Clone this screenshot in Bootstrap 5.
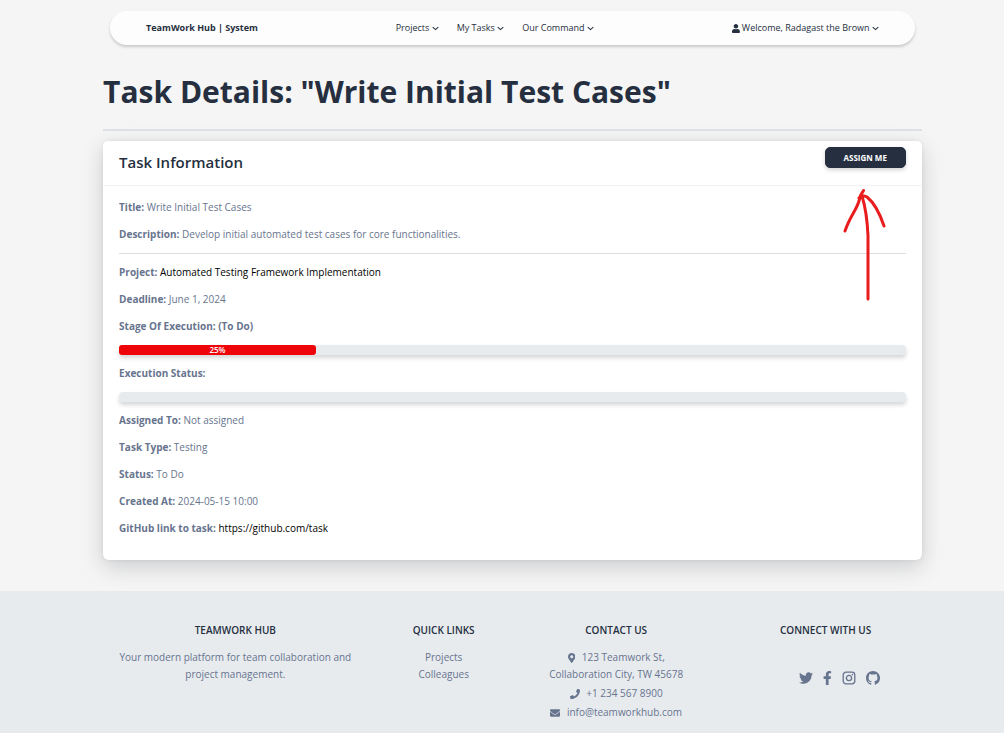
<!DOCTYPE html>
<html lang="en">
<head>
<meta charset="utf-8">
<meta name="viewport" content="width=device-width, initial-scale=1">
<title>Task Details - TeamWork Hub</title>
<link rel="stylesheet" href="https://cdn.jsdelivr.net/npm/bootstrap@5.3.0/dist/css/bootstrap.min.css">
<style>
:root { --ink: #252f40; --muted: #67748e; --tint: #e7ebee; }
body { font-family: "Open Sans", sans-serif; font-size: 10px; line-height: 20px; color: var(--muted); background: #f5f5f5; border-right: 2px solid #fff; }
a { color: inherit; text-decoration: none; }
.page-shell { padding-left: 21px; }
.page-width { width: 83.3%; max-width: 1140px; }
.top-bar { padding: 7px 36px; margin: 11px 7px 0; border-radius: 17px; background: #fdfdfd; box-shadow: 0 2px 3px rgba(0,0,0,.18); font-size: 9px; color: var(--ink); }
.top-bar .navbar-brand { font-size: 9px; line-height: 20px; font-weight: 700; color: var(--ink); padding: 0; margin: 0; }
.menu-list { gap: 18px; }
.chevron { width: 7px; height: 7px; fill: none; stroke: currentColor; stroke-width: 1.5; }
.page-title { font-size: 30px; line-height: 40px; font-weight: 700; color: var(--ink); margin: 27px 0 17px; }
.title-rule { border-top: 2px solid #dee1e6; opacity: 1; margin: 0 0 10px; }
.task-card { --bs-card-border-width: 0; --bs-card-border-radius: 6px; border: 0; color: var(--muted); box-shadow: 0 7px 22px rgba(20,30,40,.18), 0 0 4px rgba(0,0,0,.08); margin-bottom: 31px; }
.task-card .card-header { background: #fff; border-bottom: 1px solid #f3f3f4; padding: 6px 16px; height: 45px; }
.task-card h2 { font-size: 15px; line-height: 30px; font-weight: 600; color: var(--ink); }
.btn-assign { --bs-btn-font-size: 8px; --bs-btn-font-weight: 700; --bs-btn-padding-y: 0; --bs-btn-padding-x: 18px; --bs-btn-color: #fff; --bs-btn-bg: #252f40; --bs-btn-border-color: #252f40; --bs-btn-hover-color: #fff; --bs-btn-hover-bg: #38455c; --bs-btn-border-radius: 5px; line-height: 19px; box-shadow: 0 2px 4px rgba(0,0,0,.18); }
.task-card .card-body { padding: 11px 16px 15px; }
.task-card p { margin-bottom: 7px; }
.task-card p a { color: #000; }
.task-rule { border-top: 1px solid #dcdee0; opacity: 1; margin: 9px 0 8px; }
.stage-bar { --bs-progress-height: 10px; --bs-progress-bg: #e7ebee; --bs-progress-bar-bg: #ee0509; --bs-progress-border-radius: 4px; --bs-progress-font-size: 8px; margin: 9px 0 8px; box-shadow: 0 3px 4px rgba(0,0,0,.16); overflow: visible; }
.stage-bar .progress-bar { border-radius: 3px; font-weight: 600; }
.hand-arrow { position: absolute; top: 45px; right: 32px; width: 50px; height: 118px; fill: none; stroke: #e91d1d; stroke-width: 3; stroke-linecap: round; stroke-linejoin: round; pointer-events: none; }
.site-footer { background: var(--tint); padding-top: 30px; text-align: center; }
.footer-grid { width: 85%; display: grid; grid-template-columns: 282fr 136fr 210fr 210fr; line-height: 17px; }
.site-footer h3 { font-size: 10px; line-height: 18px; font-weight: 600; color: var(--ink); margin-bottom: 10px; }
.site-footer p { margin: 0; }
.site-footer .contact-line { margin-top: 2px; }
.glyph { height: 10px; fill: currentColor; }
.social { gap: 10px; margin: 32px 0 0 28px; }
.social svg { height: 14px; fill: currentColor; display: block; }
</style>
</head>
<body class="min-vh-100 d-flex flex-column">
<div class="page-shell">
<div class="page-width mx-auto">
  <nav class="top-bar d-flex justify-content-between align-items-center" aria-label="Main">
    <a class="navbar-brand" href="#">TeamWork Hub | System</a>
    <div class="menu-list d-flex">
      <a href="#">Projects <svg class="chevron" viewBox="0 0 10 10"><path d="M1 3L5 6.500 9 3"/></svg></a>
      <a href="#">My Tasks <svg class="chevron" viewBox="0 0 10 10"><path d="M1 3L5 6.500 9 3"/></svg></a>
      <a href="#">Our Command <svg class="chevron" viewBox="0 0 10 10"><path d="M1 3L5 6.500 9 3"/></svg></a>
    </div>
    <a href="#"><svg height="9" viewBox="0 0 448 512" fill="currentColor"><path d="M224 256c70.700 0 128-57.300 128-128S294.700 0 224 0 96 57.300 96 128s57.300 128 128 128zm89.600 32h-16.700c-22.200 10.200-46.900 16-72.900 16s-50.600-5.800-72.900-16h-16.700C60.200 288 0 348.200 0 422.400V464c0 26.500 21.500 48 48 48h352c26.500 0 48-21.500 48-48v-41.600c0-74.200-60.200-134.400-134.400-134.400z"/></svg> Welcome, Radagast the Brown <svg class="chevron" viewBox="0 0 10 10"><path d="M1 3L5 6.500 9 3"/></svg></a>
  </nav>
  <main>
    <h1 class="page-title">Task Details: "Write Initial Test Cases"</h1>
    <hr class="title-rule">
    <section class="card task-card">
      <div class="card-header d-flex justify-content-between align-items-start">
        <h2 class="mb-0">Task Information</h2>
        <button type="button" class="btn btn-assign">ASSIGN ME</button>
      </div>
      <div class="card-body">
        <p><strong>Title:</strong> Write Initial Test Cases</p>
        <p><strong>Description:</strong> Develop initial automated test cases for core functionalities.</p>
        <hr class="task-rule">
        <p><strong>Project:</strong> <a href="#">Automated Testing Framework Implementation</a></p>
        <p><strong>Deadline:</strong> June 1, 2024</p>
        <p><strong>Stage Of Execution: (To Do)</strong></p>
        <div class="progress stage-bar"><div class="progress-bar" role="progressbar" aria-label="Stage of execution" aria-valuenow="25" aria-valuemin="0" aria-valuemax="100" style="width: 25%">25%</div></div>
        <p><strong>Execution Status:</strong></p>
        <div class="progress stage-bar"><div class="progress-bar" role="progressbar" aria-label="Execution status" aria-valuenow="0" aria-valuemin="0" aria-valuemax="100" style="width: 0%"></div></div>
        <p><strong>Assigned To:</strong> Not assigned</p>
        <p><strong>Task Type:</strong> Testing</p>
        <p><strong>Status:</strong> To Do</p>
        <p><strong>Created At:</strong> 2024-05-15 10:00</p>
        <p><strong>GitHub link to task:</strong> <a href="https://github.com/task">https://github.com/task</a></p>
      </div>
      <svg class="hand-arrow" viewBox="0 0 50 118" aria-hidden="true"><path d="M28 113V50Q27 26 22 10M5 45C10 30 16 25 19 15Q20 9 23.500 4.500M19 12Q22 8 27 11Q37 19 44 40"/></svg>
    </section>
  </main>
</div>
</div>
<footer class="site-footer flex-grow-1">
  <div class="page-shell">
  <div class="footer-grid mx-auto">
    <div class="px-3">
      <h3>TEAMWORK HUB</h3>
      <p>Your modern platform for team collaboration and project management.</p>
    </div>
    <div>
      <h3>QUICK LINKS</h3>
      <p><a href="#">Projects</a></p>
      <p><a href="#">Colleagues</a></p>
    </div>
    <div>
      <h3>CONTACT US</h3>
      <p><svg class="glyph me-1" viewBox="0 0 384 512"><path d="M172.268 501.670C26.970 291.031 0 269.413 0 192 0 85.961 85.961 0 192 0s192 85.961 192 192c0 77.413-26.970 99.031-172.268 309.670-9.535 13.774-29.930 13.773-39.464 0zM192 272c44.183 0 80-35.817 80-80s-35.817-80-80-80-80 35.817-80 80 35.817 80 80 80z"/></svg> 123 Teamwork St,<br>Collaboration City, TW 45678</p>
      <p class="contact-line"><svg class="glyph me-1" viewBox="0 0 512 512"><path d="M493.400 24.600l-104-24c-11.300-2.600-22.900 3.300-27.500 13.900l-48 112c-4.200 9.800-1.400 21.300 6.900 28l60.600 49.600c-36 76.700-98.900 140.500-177.200 177.200l-49.600-60.600c-6.800-8.300-18.200-11.100-28-6.900l-112 48C3.900 366.500-2 378.100.6 389.400l24 104C27.100 504.200 36.700 512 48 512c256.100 0 464-207.500 464-464 0-11.200-7.700-20.900-18.600-23.400z"/></svg> +1 234 567 8900</p>
      <p class="contact-line"><svg class="glyph me-1" viewBox="0 0 512 512"><path d="M502.300 190.800c3.900-3.100 9.700-.2 9.700 4.700V400c0 26.500-21.500 48-48 48H48c-26.500 0-48-21.500-48-48V195.600c0-5 5.700-7.800 9.700-4.700 22.400 17.400 52.100 39.500 154.100 113.600 21.100 15.400 56.700 47.800 92.200 47.600 35.700.3 72-32.800 92.300-47.600 102-74.100 131.600-96.300 154-113.700zM256 320c23.200.4 56.600-29.200 73.400-41.400 132.700-96.300 142.800-104.700 173.400-128.700 5.800-4.500 9.200-11.500 9.200-18.900v-19c0-26.500-21.500-48-48-48H48c-26.500 0-48 21.500-48 48v19c0 7.400 3.400 14.300 9.200 18.900 30.600 23.900 40.700 32.400 173.400 128.700 16.800 12.200 50.200 41.800 73.400 41.400z"/></svg> info@teamworkhub.com</p>
    </div>
    <div>
      <h3>CONNECT WITH US</h3>
      <div class="social d-flex justify-content-center align-items-center">
        <a href="#" aria-label="Twitter"><svg viewBox="0 0 512 512"><path d="M459.370 151.716c.325 4.548.325 9.097.325 13.645 0 138.720-105.583 298.558-298.558 298.558-59.452 0-114.680-17.219-161.137-47.106 8.447.974 16.568 1.299 25.340 1.299 49.055 0 94.213-16.568 130.274-44.832-46.132-.975-84.792-31.188-98.112-72.772 6.498.974 12.995 1.624 19.818 1.624 9.421 0 18.843-1.300 27.614-3.573-48.081-9.747-84.143-51.980-84.143-102.985v-1.299c13.969 7.797 30.214 12.670 47.431 13.319-28.264-18.843-46.781-51.005-46.781-87.391 0-19.492 5.197-37.360 14.294-52.954 51.655 63.675 129.300 105.258 216.365 109.807-1.624-7.797-2.599-15.918-2.599-24.040 0-57.828 46.782-104.934 104.934-104.934 30.213 0 57.502 12.670 76.670 33.137 23.715-4.548 46.456-13.320 66.599-25.340-7.798 24.366-24.366 44.833-46.132 57.827 21.117-2.273 41.584-8.122 60.426-16.243-14.292 20.791-32.161 39.308-52.628 54.253z"/></svg></a>
        <a href="#" aria-label="Facebook"><svg viewBox="0 0 320 512"><path d="M279.140 288l14.220-92.660h-88.910v-60.130c0-25.350 12.420-50.060 52.240-50.060h40.420V6.260S260.430 0 225.360 0c-73.220 0-121.080 44.380-121.080 124.720v70.620H22.890V288h81.390v224h100.170V288z"/></svg></a>
        <a href="#" aria-label="Instagram"><svg viewBox="0 0 14 14"><path fill="none" stroke="currentColor" stroke-width="1.300" d="M4 1.200h6A2.800 2.800 0 0 1 12.800 4v6a2.800 2.800 0 0 1-2.800 2.800H4A2.800 2.800 0 0 1 1.200 10V4A2.800 2.800 0 0 1 4 1.200zM4.400 7a2.600 2.600 0 1 0 5.200 0a2.600 2.600 0 1 0-5.200 0z"/><circle cx="10.400" cy="3.600" r=".8"/></svg></a>
        <a href="#" aria-label="GitHub"><svg viewBox="0 0 16 16"><path d="M8 0C3.580 0 0 3.580 0 8c0 3.540 2.290 6.530 5.470 7.590.4.070.55-.17.55-.38 0-.19-.01-.82-.01-1.490-2.010.37-2.530-.49-2.690-.94-.09-.23-.48-.94-.82-1.130-.28-.15-.68-.52-.01-.53.63-.01 1.080.58 1.230.82.72 1.210 1.870.87 2.330.66.070-.52.280-.87.510-1.070-1.780-.2-3.640-.89-3.640-3.950 0-.87.310-1.590.820-2.150-.08-.2-.36-1.020.080-2.120 0 0 .67-.21 2.200.82.640-.18 1.320-.27 2-.27s1.360.09 2 .27c1.530-1.040 2.200-.82 2.200-.82.440 1.100.160 1.920.080 2.120.510.560.820 1.270.820 2.150 0 3.070-1.870 3.750-3.650 3.950.290.250.540.730.540 1.480 0 1.070-.01 1.930-.01 2.200 0 .210.150.460.550.380A8.010 8.010 0 0 0 16 8c0-4.420-3.580-8-8-8z"/></svg></a>
      </div>
    </div>
  </div>
  </div>
</footer>
<script src="https://cdn.jsdelivr.net/npm/bootstrap@5.3.0/dist/js/bootstrap.bundle.min.js"></script>
</body>
</html>
